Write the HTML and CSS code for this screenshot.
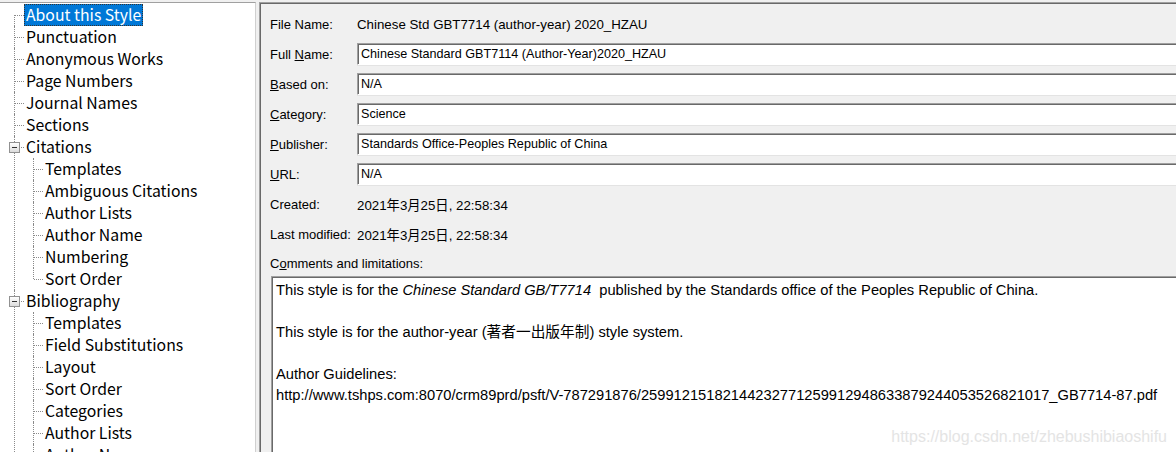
FILE: index.html
```html
<!DOCTYPE html>
<html>
<head>
<meta charset="utf-8">
<link rel="stylesheet" href="styles.css">
</head>
<body>
<div class="app">
  <div class="treepane">
    <ul class="tree">
      <li class="node"><span class="label sel">About this Style</span></li>
      <li class="node"><span class="label">Punctuation</span></li>
      <li class="node"><span class="label">Anonymous Works</span></li>
      <li class="node"><span class="label">Page Numbers</span></li>
      <li class="node"><span class="label">Journal Names</span></li>
      <li class="node"><span class="label">Sections</span></li>
      <li class="node parent"><span class="exp"></span><span class="label">Citations</span>
        <ul class="sub">
          <li class="node"><span class="label">Templates</span></li>
          <li class="node"><span class="label">Ambiguous Citations</span></li>
          <li class="node"><span class="label">Author Lists</span></li>
          <li class="node"><span class="label">Author Name</span></li>
          <li class="node"><span class="label">Numbering</span></li>
          <li class="node"><span class="label">Sort Order</span></li>
        </ul>
      </li>
      <li class="node parent"><span class="exp"></span><span class="label">Bibliography</span>
        <ul class="sub">
          <li class="node"><span class="label">Templates</span></li>
          <li class="node"><span class="label">Field Substitutions</span></li>
          <li class="node"><span class="label">Layout</span></li>
          <li class="node"><span class="label">Sort Order</span></li>
          <li class="node"><span class="label">Categories</span></li>
          <li class="node"><span class="label">Author Lists</span></li>
          <li class="node cont"><span class="label">Author Name</span></li>
        </ul>
      </li>
    </ul>
  </div>
  <div class="splitter"></div>
  <div class="formpane">
    <div class="row"><div class="lbl">File Name:</div><div class="val">Chinese Std GBT7714 (author-year) 2020_HZAU</div></div>
    <div class="row"><div class="lbl">Full <u>N</u>ame:</div><div class="field">Chinese Standard GBT7114 (Author-Year)2020_HZAU</div></div>
    <div class="row"><div class="lbl"><u>B</u>ased on:</div><div class="field">N/A</div></div>
    <div class="row"><div class="lbl"><u>C</u>ategory:</div><div class="field">Science</div></div>
    <div class="row"><div class="lbl"><u>P</u>ublisher:</div><div class="field">Standards Office-Peoples Republic of China</div></div>
    <div class="row"><div class="lbl"><u>U</u>RL:</div><div class="field">N/A</div></div>
    <div class="row"><div class="lbl">Created:</div><div class="val">2021年3月25日, 22:58:34</div></div>
    <div class="row"><div class="lbl">Last modified:</div><div class="val">2021年3月25日, 22:58:34</div></div>
    <div class="clabel">C<u>o</u>mments and limitations:</div>
    <div class="comments">
      <p>This style is for the <i>Chinese Standard GB/T7714</i>&nbsp; published by the Standards office of the Peoples Republic of China.</p>
      <p>&nbsp;</p>
      <p>This style is for the author-year (著者一出版年制) style system.</p>
      <p>&nbsp;</p>
      <p>Author Guidelines:</p>
      <p>http://www.tshps.com:8070/crm89prd/psft/V-787291876/25991215182144232771259912948633879244053526821017_GB7714-87.pdf</p>
    </div>
  </div>
  <div class="watermark">https://blog.csdn.net/zhebushibiaoshifu</div>
</div>
</body>
</html>
```
FILE: styles.css
```css
html, body {
  margin: 0;
  padding: 0;
  background: #f0f0f0;
  overflow: hidden;
}
.app {
  position: relative;
  width: 1176px;
  height: 452px;
  overflow: hidden;
  display: flex;
  align-items: flex-start;
  padding-top: 2px;
  box-sizing: border-box;
}
.treepane {
  flex: none;
  width: 256px;
  height: 450px;
  background: #fff;
  border-top: 1px solid #a0a0a0;
  border-right: 1px solid #d0d0d0;
  box-sizing: border-box;
  overflow: hidden;
  font-family: "Noto Sans CJK SC", "Noto Sans", sans-serif;
  font-size: 15.8px;
  color: #000;
}
.tree, .sub {
  list-style: none;
  margin: 0;
  padding: 0;
}
.tree {
  padding-top: 1px;
}
.node {
  position: relative;
  padding-left: 24px;
}
.sub .node {
  padding-left: 43px;
}
.sub {
  margin-left: -24px;
}
.label {
  display: block;
  width: max-content;
  height: 22px;
  line-height: 21px;
  padding: 0 2px;
  box-sizing: border-box;
  white-space: nowrap;
}
.label.sel {
  background: #0078d7;
  color: #fff;
  outline: 1px dotted #333;
  outline-offset: -1px;
}
.tree > .node::before {
  content: "";
  position: absolute;
  left: 14px;
  top: 0;
  bottom: 0;
  border-left: 1px dotted #8a8a8a;
}
.tree > .node:first-child::before {
  top: 11px;
}
.tree > .node::after {
  content: "";
  position: absolute;
  left: 15px;
  top: 11px;
  width: 9px;
  border-top: 1px dotted #8a8a8a;
}
.sub > .node::before {
  content: "";
  position: absolute;
  left: 33px;
  top: 0;
  bottom: 0;
  border-left: 1px dotted #8a8a8a;
}
.sub > .node:last-child::before {
  bottom: auto;
  height: 11px;
}
.sub > .node.cont::before {
  bottom: 0;
  height: auto;
}
.sub > .node::after {
  content: "";
  position: absolute;
  left: 34px;
  top: 11px;
  width: 9px;
  border-top: 1px dotted #8a8a8a;
}
.exp {
  position: absolute;
  left: 9px;
  top: 6px;
  width: 9px;
  height: 9px;
  border: 1px solid #919191;
  background: linear-gradient(#ffffff, #dcdcdc);
  z-index: 2;
}
.exp::after {
  content: "";
  position: absolute;
  left: 2px;
  top: 4px;
  width: 5px;
  height: 1px;
  background: #333;
}
.splitter {
  flex: none;
  width: 3px;
}
.formpane {
  flex: none;
  width: 1000px;
  height: 470px;
  border-top: 1px solid #a0a0a0;
  border-left: 1px solid #a0a0a0;
  box-shadow: inset 1px 1px 0 #696969;
  padding: 6px 0 0 10px;
  box-sizing: border-box;
  font-family: "Liberation Sans", "Noto Sans CJK SC", sans-serif;
  font-size: 13px;
  color: #000;
}
.row {
  display: flex;
  align-items: center;
  height: 30px;
}
.lbl {
  flex: none;
  width: 87px;
  white-space: nowrap;
}
.val {
  white-space: nowrap;
  font-size: 13.3px;
}
.field {
  flex: 1;
  height: 22px;
  line-height: 20px;
  font-size: 12.6px;
  background: #fff;
  border-top: 1px solid #a0a0a0;
  border-left: 1px solid #a0a0a0;
  border-bottom: 1px solid #fff;
  box-shadow: inset 1px 1px 0 #696969, 0 1px 0 #e3e3e3;
  padding-left: 3px;
  box-sizing: border-box;
  white-space: nowrap;
}
.clabel {
  height: 27px;
  line-height: 24px;
  padding-top: 3px;
  box-sizing: border-box;
}
.comments {
  margin-left: 1px;
  height: 200px;
  background: #fff;
  border-top: 1px solid #a0a0a0;
  border-left: 1px solid #a0a0a0;
  box-shadow: inset 1px 1px 0 #696969;
  padding: 3px 0 0 4px;
  box-sizing: border-box;
  font-family: "Liberation Sans", "Noto Sans CJK SC", sans-serif;
  font-size: 14.7px;
  line-height: 21px;
}
.comments p {
  margin: 0;
  white-space: nowrap;
}
.watermark {
  position: absolute;
  right: 9px;
  bottom: 6px;
  font-family: "Liberation Sans", sans-serif;
  font-size: 16px;
  color: #e4e4e4;
}
```
